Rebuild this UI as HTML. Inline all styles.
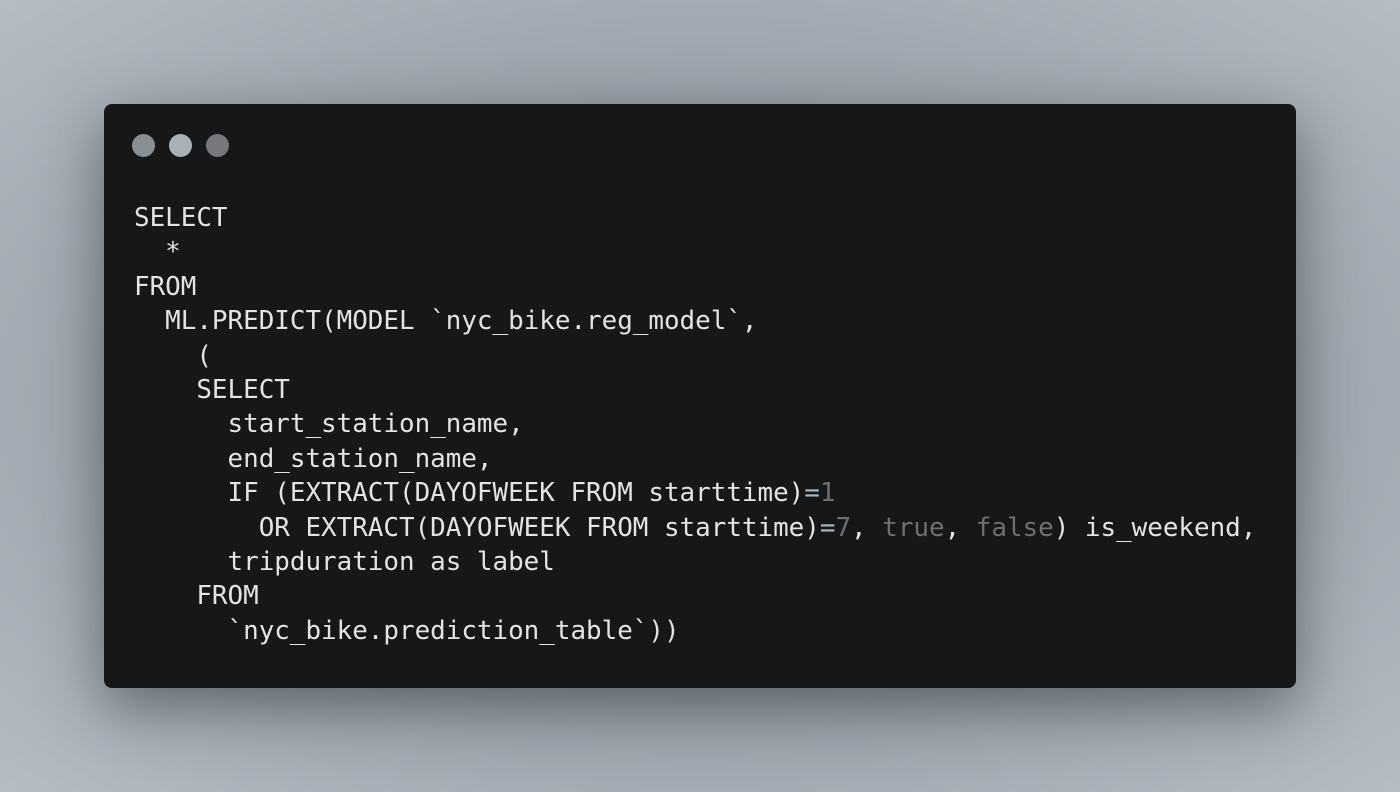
<!DOCTYPE html>
<html><head><style>
html,body{margin:0;padding:0;}
body{width:1400px;height:792px;overflow:hidden;background:radial-gradient(ellipse at 50% 50%,#7e858c 0%,#9aa3ab 55%,#b4bcc4 100%);position:relative;}
.card{position:absolute;left:104px;top:104px;width:1192px;height:584px;background:#161719;border-radius:8px;box-shadow:0 20px 60px rgba(40,45,50,.55);}
.dot{position:absolute;top:30px;width:23px;height:23px;border-radius:50%;}
pre{position:absolute;left:30px;top:97px;margin:0;font-family:"DejaVu Sans Mono","Liberation Mono",monospace;font-size:25.9px;line-height:34.4px;color:#e3e3e3;}
.g{color:#6f6f6f}.b{color:#a9bcc6}
</style></head><body>
<div class="card">
<div class="dot" style="left:28px;background:#8a8f94"></div>
<div class="dot" style="left:65px;background:#a8b1b8"></div>
<div class="dot" style="left:102px;background:#76787b"></div>
<pre>SELECT
  *
FROM
  ML.PREDICT(MODEL `nyc_bike.reg_model`,
    (
    SELECT
      start_station_name,
      end_station_name,
      IF (EXTRACT(DAYOFWEEK FROM starttime)<span class="b">=</span><span class="g">1</span>
        OR EXTRACT(DAYOFWEEK FROM starttime)<span class="b">=</span><span class="g">7</span>, <span class="g">true</span>, <span class="g">false</span>) is_weekend,
      tripduration as label
    FROM
      `nyc_bike.prediction_table`))</pre>
</div>
</body></html>
